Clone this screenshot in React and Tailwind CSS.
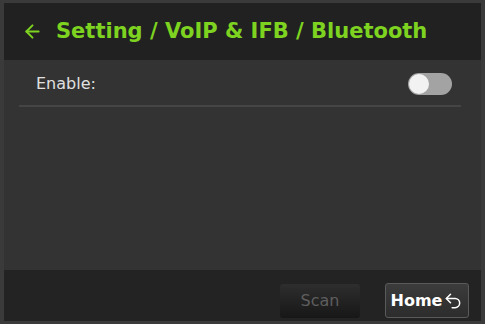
import { ArrowLeft, Undo2 } from 'lucide-react';

export default function App() {
  return (
    <div className="w-[485px] h-[324px] bg-[#3a3a3a] pt-[3px] pl-[4px] pr-[4px] pb-[3px]" style={{ fontFamily: '"DejaVu Sans", Verdana, sans-serif' }}>
      <div className="flex flex-col h-full bg-[#333333]">
        {/* header */}
        <div className="h-[57px] bg-[#212121] flex items-center pl-[18px] shrink-0">
          <ArrowLeft className="w-[21px] h-[21px] text-[#7ed321]" strokeWidth={2.2} />
          <span className="ml-[13px] text-[21px] font-bold text-[#7ed321]">
            Setting / VoIP &amp; IFB / Bluetooth
          </span>
        </div>

        {/* body */}
        <div className="flex-1 pl-[15px] pr-[20px]">
          <div className="flex items-center justify-between h-[47px] border-b-2 border-[#454545] pl-[17px] pr-[9px]">
            <span className="text-[16px] text-[#e0e0e0] mt-[3px]">Enable:</span>
            <div className="relative w-[44px] h-[22px] rounded-full bg-[#a3a3a3] mt-[2px]">
              <div className="absolute left-[1px] top-[1px] w-[20px] h-[20px] rounded-full bg-[#f2f2f2]" />
            </div>
          </div>
        </div>

        {/* footer */}
        <div className="h-[51px] bg-[#232323] flex items-start justify-end pt-[13px] pr-[12px] gap-[25px] shrink-0">
          <button className="w-[80px] h-[34px] rounded-[3px] bg-gradient-to-b from-[#2e2e2e] to-[#171717] text-[#5e5e5e] text-[16px] mt-[1px]">
            Scan
          </button>
          <button className="w-[84px] h-[35px] rounded-[3px] border border-[#5a5a5a] bg-gradient-to-b from-[#3c3c3c] to-[#2c2c2c] text-white text-[16px] font-bold flex items-center justify-center gap-[1px]">
            Home
            <Undo2 className="w-[20px] h-[20px]" strokeWidth={1.8} />
          </button>
        </div>
      </div>
    </div>
  );
}
